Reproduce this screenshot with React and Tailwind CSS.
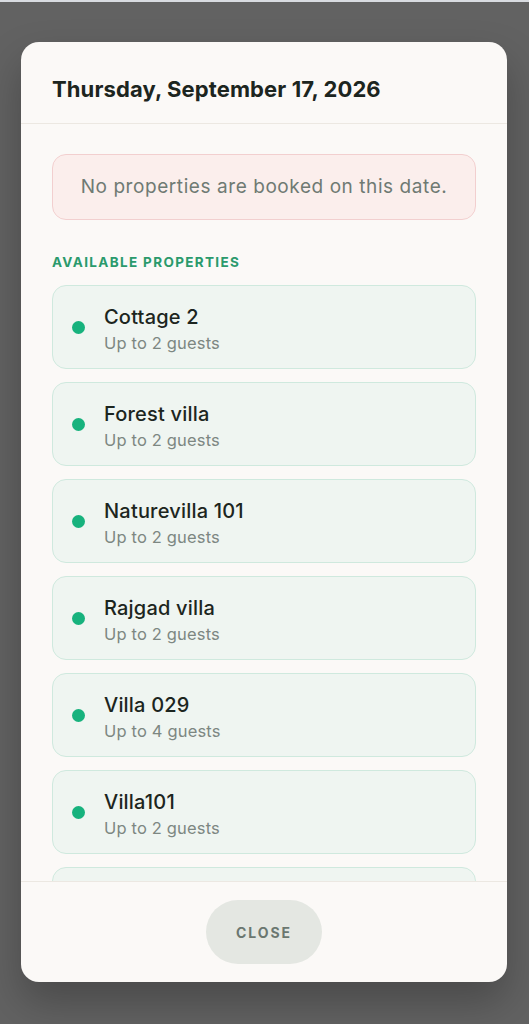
import React from "react";

const properties = [
  { name: "Cottage 2", guests: 2 },
  { name: "Forest villa", guests: 2 },
  { name: "Naturevilla 101", guests: 2 },
  { name: "Rajgad villa", guests: 2 },
  { name: "Villa 029", guests: 4 },
  { name: "Villa101", guests: 2 },
  { name: "Villa 202", guests: 2 },
];

export default function App() {
  return (
    <div
      className="h-[1024px] w-full overflow-hidden bg-[#626262] pt-[40px] px-[21px] border-t-2 border-[#d8dbe0]"
      style={{ fontFamily: "Inter, 'Noto Sans', sans-serif" }}
    >
      <div className="h-[940px] w-[486px] bg-[#fbf9f7] rounded-[18px] flex flex-col overflow-hidden shadow-[0_20px_40px_rgba(0,0,0,0.25)]">
        {/* Header */}
        <div className="h-[82px] shrink-0 px-[31px] pt-[34px] border-b border-[#ece8e2]">
          <h2 className="text-[22px] leading-[26px] font-bold text-[#1c2520] tracking-[0.005em]">
            Thursday, September 17, 2026
          </h2>
        </div>

        {/* Body */}
        <div className="flex-1 overflow-hidden px-[31px] pt-[30px]">
          <div className="h-[66px] rounded-[14px] border border-[#f2cfcf] bg-[#fbeeec] flex items-center justify-center">
            <p className="text-[19px] text-[#6f7a73] tracking-[0.03em]">
              No properties are booked on this date.
            </p>
          </div>

          <div className="mt-[32px] mb-[13px] text-[13.5px] font-bold tracking-[0.1em] text-[#2a9a6c]">
            AVAILABLE PROPERTIES
          </div>

          <div className="flex flex-col gap-[13px]">
            {properties.map((p, index) => (
              <div
                key={index}
                className="h-[84px] shrink-0 rounded-[14px] border border-[#cfe9de] bg-[#eff5f1] flex items-center pl-[19px]"
              >
                <span className="w-[13px] h-[13px] rounded-full bg-[#17b27d] mr-[19px] shrink-0"></span>
                <div className="flex flex-col gap-[3px] pt-[5px]">
                  <span className="text-[20px] font-medium leading-[24px] text-[#1c2520] tracking-[0.01em]">
                    {p.name}
                  </span>
                  <span className="text-[16.5px] leading-[22px] text-[#7d8782] tracking-[0.01em]">
                    Up to {p.guests} guests
                  </span>
                </div>
              </div>
            ))}
          </div>
        </div>

        {/* Footer */}
        <div className="h-[101px] shrink-0 border-t border-[#ece8e2] flex items-center justify-center">
          <button className="w-[116px] h-[64px] rounded-full bg-[#e4e7e2] text-[14px] font-bold tracking-[0.14em] text-[#6b7770]">
            CLOSE
          </button>
        </div>
      </div>
    </div>
  );
}
